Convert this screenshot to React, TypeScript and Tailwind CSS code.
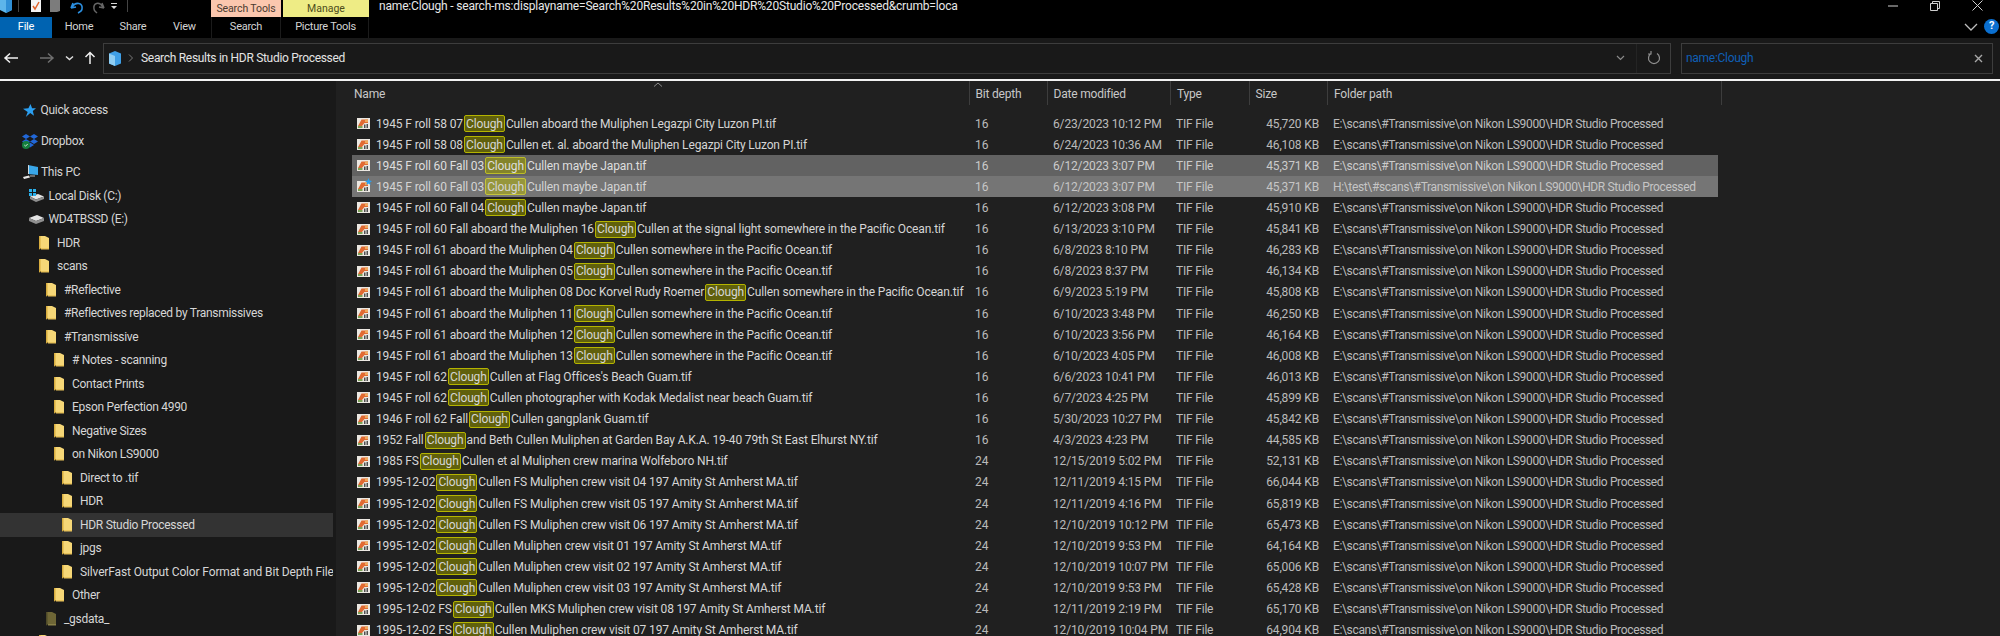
import React from 'react';

const E_PATH = 'E:\\scans\\#Transmissive\\on Nikon LS9000\\HDR Studio Processed';
const H_PATH = 'H:\\test\\#scans\\#Transmissive\\on Nikon LS9000\\HDR Studio Processed';

type FileRow = {
  pre: string;
  post: string;
  bit: string;
  date: string;
  size: string;
  path?: string;
  state?: 'selected' | 'focused';
};

const files: FileRow[] = [
  { pre: '1945 F roll 58 07', post: 'Cullen aboard the Muliphen Legazpi City Luzon PI.tif', bit: '16', date: '6/23/2023 10:12 PM', size: '45,720 KB' },
  { pre: '1945 F roll 58 08', post: 'Cullen et. al. aboard the Muliphen Legazpi City Luzon PI.tif', bit: '16', date: '6/24/2023 10:36 AM', size: '46,108 KB' },
  { pre: '1945 F roll 60 Fall 03', post: 'Cullen maybe Japan.tif', bit: '16', date: '6/12/2023 3:07 PM', size: '45,371 KB', state: 'selected' },
  { pre: '1945 F roll 60 Fall 03', post: 'Cullen maybe Japan.tif', bit: '16', date: '6/12/2023 3:07 PM', size: '45,371 KB', path: H_PATH, state: 'focused' },
  { pre: '1945 F roll 60 Fall 04', post: 'Cullen maybe Japan.tif', bit: '16', date: '6/12/2023 3:08 PM', size: '45,910 KB' },
  { pre: '1945 F roll 60 Fall aboard the Muliphen 16', post: 'Cullen at the signal light somewhere in the Pacific Ocean.tif', bit: '16', date: '6/13/2023 3:10 PM', size: '45,841 KB' },
  { pre: '1945 F roll 61 aboard the Muliphen 04', post: 'Cullen somewhere in the Pacific Ocean.tif', bit: '16', date: '6/8/2023 8:10 PM', size: '46,283 KB' },
  { pre: '1945 F roll 61 aboard the Muliphen 05', post: 'Cullen somewhere in the Pacific Ocean.tif', bit: '16', date: '6/8/2023 8:37 PM', size: '46,134 KB' },
  { pre: '1945 F roll 61 aboard the Muliphen 08 Doc Korvel Rudy Roemer', post: 'Cullen somewhere in the Pacific Ocean.tif', bit: '16', date: '6/9/2023 5:19 PM', size: '45,808 KB' },
  { pre: '1945 F roll 61 aboard the Muliphen 11', post: 'Cullen somewhere in the Pacific Ocean.tif', bit: '16', date: '6/10/2023 3:48 PM', size: '46,250 KB' },
  { pre: '1945 F roll 61 aboard the Muliphen 12', post: 'Cullen somewhere in the Pacific Ocean.tif', bit: '16', date: '6/10/2023 3:56 PM', size: '46,164 KB' },
  { pre: '1945 F roll 61 aboard the Muliphen 13', post: 'Cullen somewhere in the Pacific Ocean.tif', bit: '16', date: '6/10/2023 4:05 PM', size: '46,008 KB' },
  { pre: '1945 F roll 62', post: "Cullen at Flag Offices's Beach Guam.tif", bit: '16', date: '6/6/2023 10:41 PM', size: '46,013 KB' },
  { pre: '1945 F roll 62', post: 'Cullen photographer with Kodak Medalist near beach Guam.tif', bit: '16', date: '6/7/2023 4:25 PM', size: '45,899 KB' },
  { pre: '1946 F roll 62 Fall', post: 'Cullen gangplank Guam.tif', bit: '16', date: '5/30/2023 10:27 PM', size: '45,842 KB' },
  { pre: '1952 Fall', post: 'and Beth Cullen Muliphen at Garden Bay A.K.A. 19-40 79th St East Elhurst NY.tif', bit: '16', date: '4/3/2023 4:23 PM', size: '44,585 KB' },
  { pre: '1985 FS', post: 'Cullen et al Muliphen crew marina Wolfeboro NH.tif', bit: '24', date: '12/15/2019 5:02 PM', size: '52,131 KB' },
  { pre: '1995-12-02', post: 'Cullen FS Muliphen crew visit 04 197 Amity St Amherst MA.tif', bit: '24', date: '12/11/2019 4:15 PM', size: '66,044 KB' },
  { pre: '1995-12-02', post: 'Cullen FS Muliphen crew visit 05 197 Amity St Amherst MA.tif', bit: '24', date: '12/11/2019 4:16 PM', size: '65,819 KB' },
  { pre: '1995-12-02', post: 'Cullen FS Muliphen crew visit 06 197 Amity St Amherst MA.tif', bit: '24', date: '12/10/2019 10:12 PM', size: '65,473 KB' },
  { pre: '1995-12-02', post: 'Cullen Muliphen crew visit 01 197 Amity St Amherst MA.tif', bit: '24', date: '12/10/2019 9:53 PM', size: '64,164 KB' },
  { pre: '1995-12-02', post: 'Cullen Muliphen crew visit 02 197 Amity St Amherst MA.tif', bit: '24', date: '12/10/2019 10:07 PM', size: '65,006 KB' },
  { pre: '1995-12-02', post: 'Cullen Muliphen crew visit 03 197 Amity St Amherst MA.tif', bit: '24', date: '12/10/2019 9:53 PM', size: '65,428 KB' },
  { pre: '1995-12-02 FS', post: 'Cullen MKS Muliphen crew visit 08 197 Amity St Amherst MA.tif', bit: '24', date: '12/11/2019 2:19 PM', size: '65,170 KB' },
  { pre: '1995-12-02 FS', post: 'Cullen Muliphen crew visit 07 197 Amity St Amherst MA.tif', bit: '24', date: '12/10/2019 10:04 PM', size: '64,904 KB' },
];

type NavItem = { label: string; icon: 'star' | 'dropbox' | 'pc' | 'win' | 'drive' | 'folder' | 'dim'; pad: string; gap?: boolean; active?: boolean };

const nav: NavItem[] = [
  { label: 'Quick access', icon: 'star', pad: 'pl-[22px]' },
  { label: 'Dropbox', icon: 'dropbox', pad: 'pl-[22px]', gap: true },
  { label: 'This PC', icon: 'pc', pad: 'pl-[22px]', gap: true },
  { label: 'Local Disk (C:)', icon: 'win', pad: 'pl-[29px]' },
  { label: 'WD4TBSSD (E:)', icon: 'drive', pad: 'pl-[29px]' },
  { label: 'HDR', icon: 'folder', pad: 'pl-[39px]' },
  { label: 'scans', icon: 'folder', pad: 'pl-[39px]' },
  { label: '#Reflective', icon: 'folder', pad: 'pl-[46px]' },
  { label: '#Reflectives replaced by Transmissives', icon: 'folder', pad: 'pl-[46px]' },
  { label: '#Transmissive', icon: 'folder', pad: 'pl-[46px]' },
  { label: '# Notes - scanning', icon: 'folder', pad: 'pl-[54px]' },
  { label: 'Contact Prints', icon: 'folder', pad: 'pl-[54px]' },
  { label: 'Epson Perfection 4990', icon: 'folder', pad: 'pl-[54px]' },
  { label: 'Negative Sizes', icon: 'folder', pad: 'pl-[54px]' },
  { label: 'on Nikon LS9000', icon: 'folder', pad: 'pl-[54px]' },
  { label: 'Direct to .tif', icon: 'folder', pad: 'pl-[62px]' },
  { label: 'HDR', icon: 'folder', pad: 'pl-[62px]' },
  { label: 'HDR Studio Processed', icon: 'folder', pad: 'pl-[62px]', active: true },
  { label: 'jpgs', icon: 'folder', pad: 'pl-[62px]' },
  { label: 'SilverFast Output Color Format and Bit Depth File', icon: 'folder', pad: 'pl-[62px]' },
  { label: 'Other', icon: 'folder', pad: 'pl-[54px]' },
  { label: '_gsdata_', icon: 'dim', pad: 'pl-[46px]' },
  { label: '', icon: 'folder', pad: 'pl-[39px]' },
];

const Folder = ({ dim }: { dim?: boolean }) => (
  <svg width="10" height="14" viewBox="0 0 10 14" className="shrink-0">
    <path d="M0 0h6l4 2v10H2l-2 1z" fill={dim ? '#6e6636' : '#f6d777'} />
    <path d="M0 0h1.500v13L0 13.500z" fill={dim ? '#4f4a28' : '#d8ad3f'} />
    <path d="M2 12h8v1.500H2z" fill={dim ? '#8a8148' : '#e9c35a'} />
  </svg>
);

const NavIcon = ({ icon }: { icon: NavItem['icon'] }) => {
  if (icon === 'folder') return <Folder />;
  if (icon === 'dim') return <Folder dim />;
  if (icon === 'star')
    return (
      <svg width="13" height="13" viewBox="0 0 13 13" className="ml-[1px] mr-[4.500px] shrink-0">
        <path d="M7.500 0l1.600 4.200H13L9.800 7l1.200 4.800-3.800-2.700L2.800 13l1.900-5L0 4.700l5.400-.4z" fill="#2b9ff0" />
      </svg>
    );
  if (icon === 'dropbox')
    return (
      <svg width="16" height="15" viewBox="0 0 16 15" className="mr-[3px] shrink-0">
        <path d="M4 0l4 2.500L4 5 0 2.500zM12 0l4 2.500L12 5 8 2.500zM4 5l4 2.500L4 10 0 7.500zM12 5l4 2.500-4 2.500-4-2.500zM8 8.500l4 2.500-4 2.500L4 11z" fill="#2167d8" />
        <circle cx="4" cy="11" r="4" fill="#15803d" />
        <path d="M2.300 11l1.200 1.200 2.200-2.200" stroke="#fff" strokeWidth="0.800" fill="none" />
      </svg>
    );
  if (icon === 'pc')
    return (
      <svg width="16" height="15" viewBox="0 0 16 15" className="mr-[3px] shrink-0">
        <path d="M6 0l10 2v8L6 9z" fill="#39a6e8" />
        <path d="M6 0l1 .2V9L6 9z" fill="#cfd8dc" />
        <path d="M1 12l6-1.500 1 2-6 1.500z" fill="#e6e6e6" />
        <path d="M8 10.500h5v1H8z" fill="#bdbdbd" />
      </svg>
    );
  if (icon === 'win')
    return (
      <svg width="15" height="13" viewBox="0 0 15 13" className="mr-[4.500px] shrink-0">
        <path d="M1 7.500l8-2.500 6 2.500-8 3z" fill="#e3e3e3" />
        <path d="M1 7.500l6 3 8-3v2.500l-8 3-6-3z" fill="#8f8f8f" />
        <path d="M0 0h3v3H0zM4 0h3v3H4zM0 4h3v3H0zM4 4h3v3H4z" fill="#2ab0ec" />
      </svg>
    );
  return (
    <svg width="15" height="9" viewBox="0 0 15 9" className="mr-[4.500px] shrink-0">
      <path d="M0 3l8-3 7 3-8 3z" fill="#e3e3e3" />
      <path d="M0 3l7 3 8-3v3L7 9 0 6z" fill="#8f8f8f" />
    </svg>
  );
};

const TifIcon = ({ badge }: { badge?: boolean }) => (
  <span className="relative shrink-0 mr-[6px]">
    <svg width="13" height="11" viewBox="0 0 13 11" className="block">
      <rect width="13" height="11" fill="#ece8e2" />
      <path d="M1 8L4.500 1.500H11V5H7.500L5 8z" fill="#e06a32" />
      <path d="M8 1.500h3V4H8z" fill="#f0a85a" />
      <path d="M1 8h4.500v2H1z" fill="#7da257" />
      <path d="M7 6.500h1.500V10H7zM9.500 6h1.500v4H9.500z" fill="#4f4f4f" />
    </svg>
    {badge && (
      <svg width="7" height="7" viewBox="0 0 7 7" className="absolute right-[-2px] top-[-3px]">
        <path d="M3.500 0l1 2.500L7 3 5 4.500 5.500 7 3.500 5.500 1.500 7 2 4.500 0 3l2.500-.5z" fill="#2b9ff0" />
      </svg>
    )}
  </span>
);

const Clough = ({ state }: { state?: FileRow['state'] }) => (
  <span
    className={`mx-[1px] flex h-[17px] w-[41px] shrink-0 items-center justify-center rounded-[2px] border ${
      state === 'focused'
        ? 'border-[#c4c43c] bg-[#96963c]'
        : state === 'selected'
          ? 'border-[#bcbc28] bg-[#84842a]'
          : 'border-[#b4b400] bg-[#60600c]'
    }`}
  >
    Clough
  </span>
);

const columns = 'grid grid-cols-[616.5px_78px_123.5px_78.5px_78.5px_395px]';

const headers = ['Name', 'Bit depth', 'Date modified', 'Type', 'Size', 'Folder path'];

const Row = ({ row }: { row: FileRow }) => (
  <div
    className={`${columns} h-[21.12px] items-center ${
      row.state === 'focused'
        ? 'bg-[#757575] text-[#d4d4d4]'
        : row.state === 'selected'
          ? 'bg-[#626262] text-[#dedede]'
          : 'text-[#d6d6d6]'
    }`}
  >
    <div className="col-span-1 flex items-center whitespace-nowrap pl-[5px] overflow-visible tracking-[-0.13px]">
      <TifIcon badge={row.state === 'focused'} />
      <span>{row.pre}</span>
      <Clough state={row.state} />
      <span>{row.post}</span>
    </div>
    <div className="pl-[6.500px] opacity-85">{row.bit}</div>
    <div className="pl-[6.500px] opacity-85 whitespace-nowrap tracking-[-0.14px]">{row.date}</div>
    <div className="pl-[6px] opacity-85 tracking-[-0.2px]">TIF File</div>
    <div className="pr-[8px] text-right opacity-85 whitespace-nowrap tracking-[-0.14px]">{row.size}</div>
    <div className="pl-[6px] opacity-85 whitespace-nowrap tracking-[-0.35px]">{row.path ?? E_PATH}</div>
  </div>
);

const QuickBar = () => (
  <div className="flex w-[211px] shrink-0 items-center overflow-hidden h-[17px]">
    <svg width="130" height="17" viewBox="0 0 130 17">
      <path d="M0 -3l6-2 6 2v13l-6 3-6-3z" fill="#5db5ea" />
      <path d="M6 0l6-3v13l-6 3z" fill="#2f8fd6" />
      <rect x="18" y="0" width="1" height="12" fill="#444" />
      <rect x="31" y="0" width="10" height="12" fill="#f4f4f4" />
      <path d="M33 6l2 3 4-7" stroke="#e0622a" strokeWidth="1.500" fill="none" />
      <path d="M50 0h10v11l-3 1h-7z" fill="#7c7c7c" />
      <path d="M73 3l-2 5M71 8l5-1M72 7c4-6 11-4 10 2 0 2-2 3-4 4" stroke="#2b8fe0" strokeWidth="1.600" fill="none" />
      <path d="M102 3l2 5M104 8l-5-1M103 7c-4-6-10-4-9 2 0 2 2 3 3 4" stroke="#666" strokeWidth="1.500" fill="none" />
      <path d="M111 3h6v1h-6zM111 6h6l-3 3z" fill="#d8d8d8" />
      <rect x="127" y="0" width="1" height="12" fill="#444" />
    </svg>
  </div>
);

export default function App() {
  return (
    <div className="flex h-[636px] w-[2000px] flex-col overflow-hidden bg-black font-['Roboto',sans-serif] text-[12px] text-[#d8d8d8]">
      {/* title row */}
      <div className="relative flex h-[17px] shrink-0 items-center">
        <QuickBar />
        <div className="flex h-[17px] w-[70px] items-center justify-center bg-[#fbc7ae] text-[10.500px] text-[#4a3a30] tracking-[-0.1px]">Search Tools</div>
        <div className="ml-[2px] flex h-[17px] w-[86px] items-center justify-center bg-[#eeec85] text-[10.500px] text-[#4d4d1c]">Manage</div>
        <div className="ml-[10px] -mt-[5px] whitespace-nowrap leading-[12px] tracking-[-0.18px] text-[#e8e8e8]">
          name:Clough - search-ms:displayname=Search%20Results%20in%20HDR%20Studio%20Processed&amp;crumb=loca
        </div>
        <div className="absolute right-[17px] top-0 flex items-center gap-[32px]">
          <svg width="10" height="10" viewBox="0 0 10 10"><path d="M0 5h10" stroke="#cfcfcf" /></svg>
          <svg width="10" height="10" viewBox="0 0 10 10"><path d="M.5 2.500h7v7h-7zM2.500 2.500V.5h7v7h-2" stroke="#cfcfcf" fill="none" /></svg>
          <svg width="11" height="11" viewBox="0 0 11 11"><path d="M.5.5l10 10M10.500.5l-10 10" stroke="#cfcfcf" /></svg>
        </div>
      </div>

      {/* ribbon tabs */}
      <div className="relative flex h-[21px] shrink-0 items-center text-[11px] tracking-[-0.25px] text-[#d4d4d4]">
        <div className="flex h-[21px] w-[52px] items-center justify-center bg-[#0063b1] text-white">File</div>
        <div className="w-[54px] text-center">Home</div>
        <div className="w-[54px] text-center">Share</div>
        <div className="w-[51px] text-center -ml-[1px]">View</div>
        <div className="ml-[1px] flex h-[21px] w-[70px] items-center justify-center border-x border-[#1b1b1b]">Search</div>
        <div className="ml-[2px] flex h-[21px] w-[86px] items-center justify-center border-r border-[#1b1b1b]">Picture Tools</div>
        <div className="absolute right-[1px] top-[2px] flex items-center gap-[6px]">
          <svg width="14" height="8" viewBox="0 0 14 8"><path d="M1 1l6 6 6-6" stroke="#bdbdbd" strokeWidth="1.300" fill="none" /></svg>
          <div className="flex h-[15px] w-[15px] items-center justify-center rounded-full bg-[#0a6fd0] text-[11px] font-bold text-white">?</div>
        </div>
      </div>

      {/* address row */}
      <div className="flex h-[41px] shrink-0 items-center bg-[#191919] pb-[1px]">
        <div className="flex w-[103px] shrink-0 items-center">
          <svg width="100" height="14" viewBox="0 0 100 14">
            <path d="M5 7h13M10 2.500L5 7l5 4.500" stroke="#f0f0f0" strokeWidth="1.500" fill="none" />
            <path d="M40 7h13M48 2.500L53 7l-5 4.500" stroke="#6f6f6f" strokeWidth="1.500" fill="none" />
            <path d="M66 5.500l3.500 3 3.500-3" stroke="#e0e0e0" strokeWidth="1.500" fill="none" />
            <path d="M90 13V1.500M85.500 6L90 1.500 94.500 6" stroke="#f0f0f0" strokeWidth="1.500" fill="none" />
          </svg>
        </div>
        <div className="flex h-[31px] w-[1568px] items-center border border-[#3d3d3d] bg-[#191919] pl-[4px]">
          <svg width="12" height="15" viewBox="0 0 12 15" className="ml-[1px] shrink-0">
            <path d="M0 2.500L6 0l6 2.500v10L6 15l-6-2.500z" fill="#3f9fe6" />
            <path d="M0 2.500L6 5v10l-6-2.500z" fill="#8fcdf2" />
          </svg>
          <svg width="6" height="8" viewBox="0 0 6 8" className="ml-[7px] shrink-0"><path d="M1 .5L4.500 4 1 7.500" stroke="#7a7a7a" fill="none" /></svg>
          <span className="ml-[7px] tracking-[-0.3px] text-[#e4e4e4]">Search Results in HDR Studio Processed</span>
          <div className="ml-auto flex h-full items-center">
            <svg width="9" height="6" viewBox="0 0 9 6"><path d="M1 1l3.500 3.500L8 1" stroke="#8a8a8a" strokeWidth="1.200" fill="none" /></svg>
            <div className="ml-[11px] h-full w-[1px] bg-[#242424]" />
            <svg width="14" height="14" viewBox="0 0 14 14" className="ml-[10px] mr-[9px]">
              <path d="M4 2.500a5.500 5.500 0 1 0 6 0M4 0v3H1" stroke="#8f8f8f" strokeWidth="1.200" fill="none" />
            </svg>
          </div>
        </div>
        <div className="ml-[10px] flex h-[31px] w-[312px] items-center border border-[#3d3d3d] bg-[#191919] pl-[4px] tracking-[-0.28px] text-[#0f5fb5]">
          name:Clough
          <svg width="9" height="9" viewBox="0 0 9 9" className="ml-auto mr-[9px]"><path d="M1 1l7 7M8 1L1 8" stroke="#a8a8a8" strokeWidth="1.400" /></svg>
        </div>
      </div>

      <div className="h-[2px] shrink-0 bg-[#f2f2f2]" />

      {/* body */}
      <div className="flex min-h-0 flex-1">
        <aside className="w-[336px] shrink-0 overflow-hidden bg-[#191919] pt-[17.5px] tracking-[-0.29px] text-[#d6d6d6]">
          {nav.map((item, i) => (
            <div
              key={i}
              className={`flex h-[23.5px] w-[333px] items-center overflow-hidden whitespace-nowrap ${item.pad} ${item.gap ? 'mt-[7.500px]' : ''} ${item.active ? 'bg-[#333333]' : ''}`}
            >
              <NavIcon icon={item.icon} />
              {(item.icon === 'folder' || item.icon === 'dim') && <span className="w-[8px] shrink-0" />}
              <span className={item.label.startsWith('SilverFast') ? 'tracking-[-0.14px]' : ''}>{item.label}</span>
            </div>
          ))}
        </aside>

        <main className="relative flex-1 overflow-hidden bg-[#202020] pl-[16px]">
          <svg width="10" height="5" viewBox="0 0 10 5" className="absolute left-[317px] top-[1px]">
            <path d="M1 4.500L5 1l4 3.500" stroke="#8a8a8a" fill="none" />
          </svg>
          <div className={`${columns} h-[32px] items-start tracking-[-0.2px] text-[#c8c8c8]`}>
            {headers.map((h, i) => (
              <div key={h} className={`flex h-[24px] items-center pt-[2px] ${i === 0 ? 'pl-[2px]' : 'border-l border-[#3d3d3d] pl-[6px]'} ${i === 5 ? 'border-r' : ''}`}>
                {h}
              </div>
            ))}
          </div>
          {files.map((row, i) => (
            <div key={i} className="w-[1366px]">
              <Row row={row} />
            </div>
          ))}
        </main>
      </div>
    </div>
  );
}
